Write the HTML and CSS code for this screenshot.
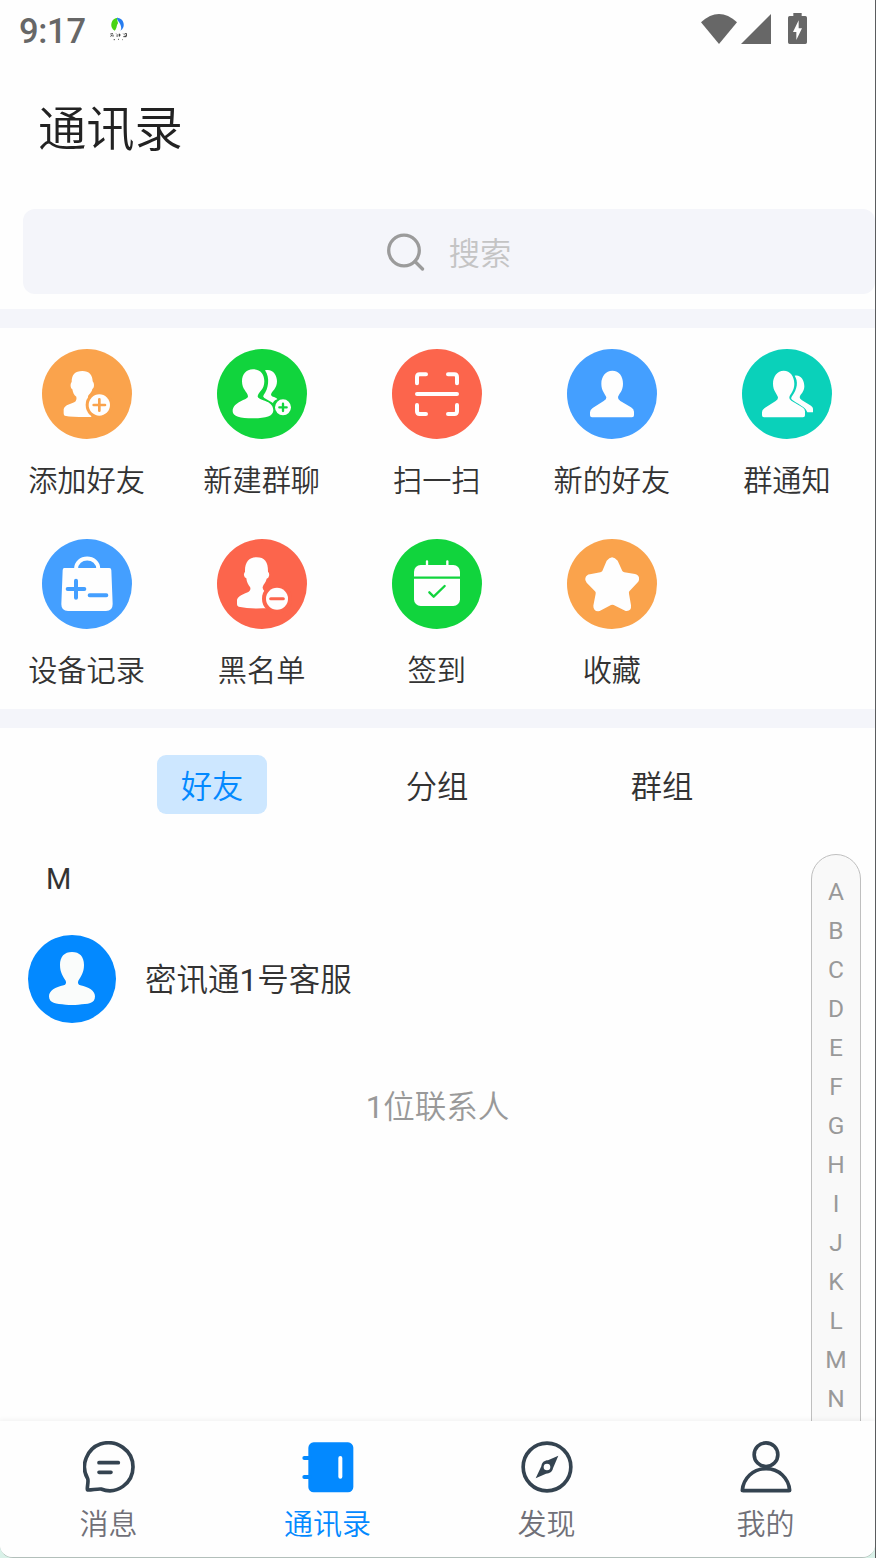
FILE: index.html
```html
<!DOCTYPE html>
<html lang="zh-CN">
<head>
<meta charset="utf-8">
<title>通讯录</title>
<link rel="stylesheet" href="styles.css">
</head>
<body>
<div class="screen">
<div class="app">
  <header class="status">
    <span class="time">9:17</span>
    <svg class="app-logo" viewBox="0 0 54 72">
      <path d="M27 2A21 21 0 0 0 17 41C25 34 21 27 27 19C27 12 22 9 27 2Z" fill="#48d414"/>
      <path d="M24 2A21 21 0 0 1 34 41C39 35 36 27 33 20C30 13 23 9 24 2Z" fill="#267cf0"/>
      <path d="M27 17C28 24 36 27 31 41H22C20 35 25 32 27 26Z" fill="#fff"/>
      <path d="M4 51l8-1M8 54l-3 5M12 53v6M22 50l3 3M22 57h5M31 50v9M29 54h6M43 50l3 3M43 59h9M47 50h6v7h-6" stroke="#222" stroke-width="2.6" fill="none"/>
      <path d="M14 68h4M27 67h3M39 68h2" stroke="#555" stroke-width="3" fill="none"/>
    </svg>
    <div class="status-icons">
      <svg class="wifi" viewBox="0 0 108 90"><path d="M0 25Q54-25 108 25L54 90Z"/></svg>
      <svg class="signal" viewBox="0 0 90 90"><path d="M90 0V90H0Z"/></svg>
      <svg class="battery" viewBox="0 0 57 93"><path fill-rule="evenodd" d="M16 0H41V9H52Q57 9 57 14V88Q57 93 52 93H5Q0 93 0 88V14Q0 9 5 9H16ZM32 22L15 57H25V81L42 46H32Z"/></svg>
    </div>
  </header>
  <h1 class="title">通讯录</h1>
  <div class="search">
    <svg viewBox="0 0 38 38"><circle cx="17" cy="17.5" r="15.3"/><path d="M28 28.5L35.5 36"/></svg>
    <span>搜索</span>
  </div>
  <div class="divider"></div>
  <section class="actions">
    <div class="action"><svg viewBox="0 0 270 270"><circle class="orange" cx="135" cy="135" r="135"/>
      <path d="M121 66C142 66 151 77 152 97C158 104 157 117 151 120C149 132 139 136 138 143L139 153L148 160V204C120 205 89 204 68 200Q65 199 65 193V181C67 167 91 165 101 157Q105 150 103 143C95 138 93 130 91 121C85 117 84 105 89 99C89 77 99 66 121 66Z"/><circle class="orange" cx="172" cy="168" r="41"/><circle cx="172" cy="168" r="32"/><path class="line orange-line" d="M155 168H189M172 151V185"/></svg><span>添加好友</span></div>
    <div class="action"><svg viewBox="0 0 270 270"><circle class="green" cx="135" cy="135" r="135"/>
      <path d="M144 64C166 58 180 77 180 97C180 120 164 126 162 137C163 145 179 143 181 151C172 154 169 159 168 162L142 147Q136 143 140 138C154 121 160 86 144 64Z"/>
      <path d="M108 61C131 61 142 77 142 97C142 124 124 128 122 142C122 156 169 152 169 184C169 203 145 208 108 208C70 208 47 203 47 187C47 157 93 154 93 142C91 128 75 122 75 97C75 77 87 61 108 61Z"/><circle cx="198" cy="175" r="24"/><path class="line green-line small" d="M187 175H209M198 164V186"/></svg><span>新建群聊</span></div>
    <div class="action"><svg viewBox="0 0 270 270"><circle class="red" cx="135" cy="135" r="135"/>
      <path class="line white-line" d="M75 103V84Q75 76 83 76H102M168 76H187Q195 76 195 84V103M75 168V187Q75 195 83 195H102M168 195H187Q195 195 195 187V168M75 135H195"/></svg><span>扫一扫</span></div>
    <div class="action"><svg viewBox="0 0 270 270"><circle class="blue" cx="135" cy="135" r="135"/>
      <path d="M136 65C157 65 168 82 168 104C168 126 157 132 153 144Q152 151 160 156L192 175Q201 180 201 188V199Q201 205 195 205H75Q69 205 69 199V190Q69 182 77 177L110 156Q119 151 118 145C114 133 103 126 103 104C103 82 116 65 136 65Z"/></svg><span>新的好友</span></div>
    <div class="action"><svg viewBox="0 0 270 270"><circle class="teal" cx="135" cy="135" r="135"/>
      <path d="M158 80C176 76 187 93 187 112C187 130 174 136 173 145Q173 150 180 154L207 170Q213 174 213 179V190H196C192 177 182 173 150 152Q145 148 149 143C167 119 169 97 158 80Z"/>
      <path d="M125 65C145 65 157 82 157 104C157 126 144 134 142 145Q141 151 148 155L181 175Q189 180 189 187V199Q189 205 183 205H66Q60 205 60 199V190Q60 182 68 177L101 156Q109 151 108 145C105 133 93 126 93 104C93 82 106 65 125 65Z"/></svg><span>群通知</span></div>
    <div class="action"><svg viewBox="0 0 270 270"><circle class="blue" cx="135" cy="135" r="135"/>
      <path d="M67 87H202Q208 87 208 94L212 195Q212 216 192 216H78Q58 216 58 196L62 94Q62 87 67 87Z"/><path class="line white-line" d="M102 91C102 48 169 48 169 91"/><path class="line blue-line" d="M77 150H127M102 125V176M143 169H193"/></svg><span>设备记录</span></div>
    <div class="action"><svg viewBox="0 0 270 270"><circle class="red" cx="135" cy="135" r="135"/>
      <path d="M119 55C143 55 153 68 153 98Q158 103 156 111Q155 117 149 119C147 130 139 135 137 144Q136 149 142 156L153 165V208H137Q95 210 65 203Q60 202 60 196V182C64 166 93 163 98 155Q102 150 99 144C94 137 89 130 88 118Q82 116 81 109Q80 103 84 98C83 70 96 55 119 55Z"/><circle class="red" cx="180" cy="179" r="45"/><circle cx="180" cy="179" r="33"/><path class="line red-line" d="M161 179H199"/></svg><span>黑名单</span></div>
    <div class="action"><svg viewBox="0 0 270 270"><circle class="green" cx="135" cy="135" r="135"/>
      <rect x="66" y="78" width="138" height="123" rx="20"/><path class="line white-line small" d="M105 67V82M166 67V82"/><path class="line green-line small square" d="M66 116H204"/><path class="line green-line small" d="M112 160L125 173L158 141"/></svg><span>签到</span></div>
    <div class="action"><svg viewBox="0 0 270 270"><circle class="orange" cx="135" cy="135" r="135"/>
      <path d="M119 65Q135 44 152 65L166 96Q168 99 172 100L204 105Q218 108 216 122Q216 126 211 131L187 157Q185 160 186 164L192 199Q194 218 176 216L140 198Q136 196 132 198L98 216Q79 219 79 200L86 164Q87 160 84 157L59 131Q53 124 55 118Q58 107 69 106L100 100Q104 99 106 96Z"/></svg><span>收藏</span></div>
  </section>
  <div class="divider"></div>
  <nav class="tabs"><div><span class="pill">好友</span></div><div>分组</div><div>群组</div></nav>
  <main class="contacts">
    <div class="list">
      <div class="letter">M</div>
      <div class="contact">
        <svg viewBox="0 0 264 264"><circle cx="132" cy="132" r="132" fill="#0389ff"/><path fill="#fafcfb" d="M132 51C155 51 168 65 168 90C168 113 158 126 151 137Q147 147 157 151C182 157 201 167 201 184C201 207 180 207 151 209Q132 211 113 209C84 207 63 205 63 184C63 167 82 157 107 151Q117 147 113 137C106 126 96 113 96 90C96 65 109 51 132 51Z"/></svg>
        <span class="name">密讯通<span class="digit">1</span>号客服</span>
      </div>
      <div class="count"><span class="digit">1</span>位联系人</div>
    </div>
    <div class="index"><span>A</span><span>B</span><span>C</span><span>D</span><span>E</span><span>F</span><span>G</span><span>H</span><span>I</span><span>J</span><span>K</span><span>L</span><span>M</span><span>N</span></div>
  </main>
  <footer class="bottom">
    <div class="nav-item"><svg viewBox="0 0 156 156"><path class="outline" d="M14 113C-10 72 14 22 52 9C101-6 150 28 150 78C150 126 102 163 54 144C44 143 27 147 17 147Q13 147 13 143C13 132 17 120 14 113Z"/><path class="outline" d="M48 65H106M48 94H84"/></svg><span>消息</span></div>
    <div class="nav-item active"><svg viewBox="0 0 156 156"><rect x="19" y="4" width="135" height="150" rx="16" fill="#0389ff"/><path d="M7 51H24M7 108H24" stroke="#0389ff" stroke-width="12" stroke-linecap="round"/><path d="M115 51V107" stroke="#fff" stroke-width="12" stroke-linecap="round"/></svg><span>通讯录</span></div>
    <div class="nav-item"><svg viewBox="0 0 156 156"><circle class="outline" cx="78" cy="78" r="71.5"/><path fill="#344350" fill-rule="evenodd" d="M112 44L96 82C94 92 86 98 75 98L44 112L61 76C62 65 70 58 81 58ZM78 68A10 10 0 1 0 78 88A10 10 0 1 0 78 68Z"/></svg><span>发现</span></div>
    <div class="nav-item"><svg viewBox="0 0 156 156"><circle class="outline" cx="78" cy="41" r="35.5"/><path class="outline" d="M7 148C10 112 39 83 78 83S146 112 149 148Q149 149 147 149H10Q7 149 7 148Z"/></svg><span>我的</span></div>
  </footer>
</div>
</div>
</body>
</html>
```
FILE: styles.css
```css
* { box-sizing: border-box; }
body { margin: 0; font-family: Roboto, "Noto Sans CJK SC", sans-serif; font-weight: 350; color: #333; }
svg { display: block; flex: none; }
.screen { width: 876px; height: 1558px; background: #d9f1e8; border-right: 1px solid #5b5d5f; overflow: hidden; }
.app { width: 875px; height: 1558px; display: flex; flex-direction: column; background: #fefefe; border-bottom: 1px solid #b2bfba; border-radius: 0 0 13px 13px; overflow: hidden; }
.status { height: 60px; flex: none; display: flex; align-items: center; padding: 0 68px 2px 19px; }
.time { width: 90px; font-size: 34.5px; font-weight: 500; line-height: 56px; letter-spacing: -.3px; color: #676767; padding-top: 3px; }
.app-logo { width: 18px; height: 24px; }
.status-icons { margin-left: auto; display: flex; align-items: flex-end; fill: #676767; padding-bottom: 1px; }
.wifi { width: 36px; height: 30px; }
.signal { width: 30px; height: 30px; margin: 0 17px 0 4px; }
.battery { width: 19px; height: 31px; }
.title { height: 149px; margin: 0; padding: 35px 0 0 38px; font-size: 48.3px; line-height: 70px; font-weight: 350; color: #222; flex: none; }
.search { height: 85px; flex: none; margin: 0 0 15px 23px; border-radius: 12px; background: #f4f5fa; display: flex; align-items: center; justify-content: center; gap: 24px; font-size: 31.3px; color: #c4c4c4; }
.search svg { width: 38px; height: 38px; fill: none; stroke: #9b9b9b; stroke-width: 3.3; stroke-linecap: round; }
.divider { height: 19px; flex: none; background: #f4f5fa; }
.actions { height: 381px; flex: none; display: grid; grid-template-columns: repeat(5, 175.1px); grid-template-rows: 190.5px 190.5px; margin-left: -1px; padding-top: 20.5px; }
.action { display: flex; flex-direction: column; align-items: center; font-size: 29.2px; line-height: 40px; gap: 22px; }
.action svg { width: 90px; height: 90px; fill: #fefefe; }
.action .orange { fill: #faa34c; }
.action .green { fill: #11d43d; }
.action .red { fill: #fc654c; }
.action .blue { fill: #449fff; }
.action .teal { fill: #0ad1ba; }
.line { fill: none; stroke-width: 12; stroke-linecap: round; stroke-linejoin: round; }
.white-line { stroke: #fefefe; }
.orange-line { stroke: #faa34c; stroke-width: 8; }
.green-line { stroke: #11d43d; }
.red-line { stroke: #fc654c; stroke-width: 9; }
.blue-line { stroke: #449fff; }
.small { stroke-width: 7; }
.square { stroke-linecap: butt; }
.tabs { height: 126px; flex: none; display: grid; grid-template-columns: repeat(3, 225px); margin-left: 99.5px; padding-top: 27px; font-size: 31.3px; line-height: 65px; text-align: center; }
.pill { display: block; width: 110px; height: 59px; margin: 0 auto; border-radius: 9px; background: #cde7ff; color: #0389ff; }
.contacts { flex: 1; min-height: 0; display: flex; overflow: hidden; }
.list { width: 811px; flex: none; }
.letter { height: 81px; padding: 5px 0 0 46px; font-size: 29px; font-weight: 400; line-height: 40px; }
.contact { display: flex; align-items: center; gap: 29px; padding-left: 28px; font-size: 31.5px; }
.name { padding-bottom: 4px; }
.digit { font-weight: 400; }
.contact svg { width: 88px; height: 88px; }
.count { width: 875px; padding-top: 62px; text-align: center; font-size: 31.5px; line-height: 46px; color: #999; }
.index { width: 50px; height: 1100px; flex: none; border: 1px solid #bfbfbf; border-radius: 25px; background: #f9f9f9; display: flex; flex-direction: column; align-items: center; padding-top: 17px; font-size: 24.5px; font-weight: 400; color: #999; }
.index span { height: 39px; flex: none; line-height: 39px; }
.bottom { height: 136px; flex: none; display: grid; grid-template-columns: repeat(4, 219px); background: #fefefe; box-shadow: 0 -1px 5px rgba(0,0,0,.06); padding-top: 20px; margin-left: -1px; width: 876px; position: relative; }
.nav-item { display: flex; flex-direction: column; align-items: center; gap: 12px; font-size: 29px; line-height: 40px; color: #707078; }
.nav-item svg { width: 52px; height: 52px; }
.nav-item.active { color: #0389ff; }
.outline { fill: none; stroke: #344350; stroke-width: 11; stroke-linecap: round; stroke-linejoin: round; }
```
